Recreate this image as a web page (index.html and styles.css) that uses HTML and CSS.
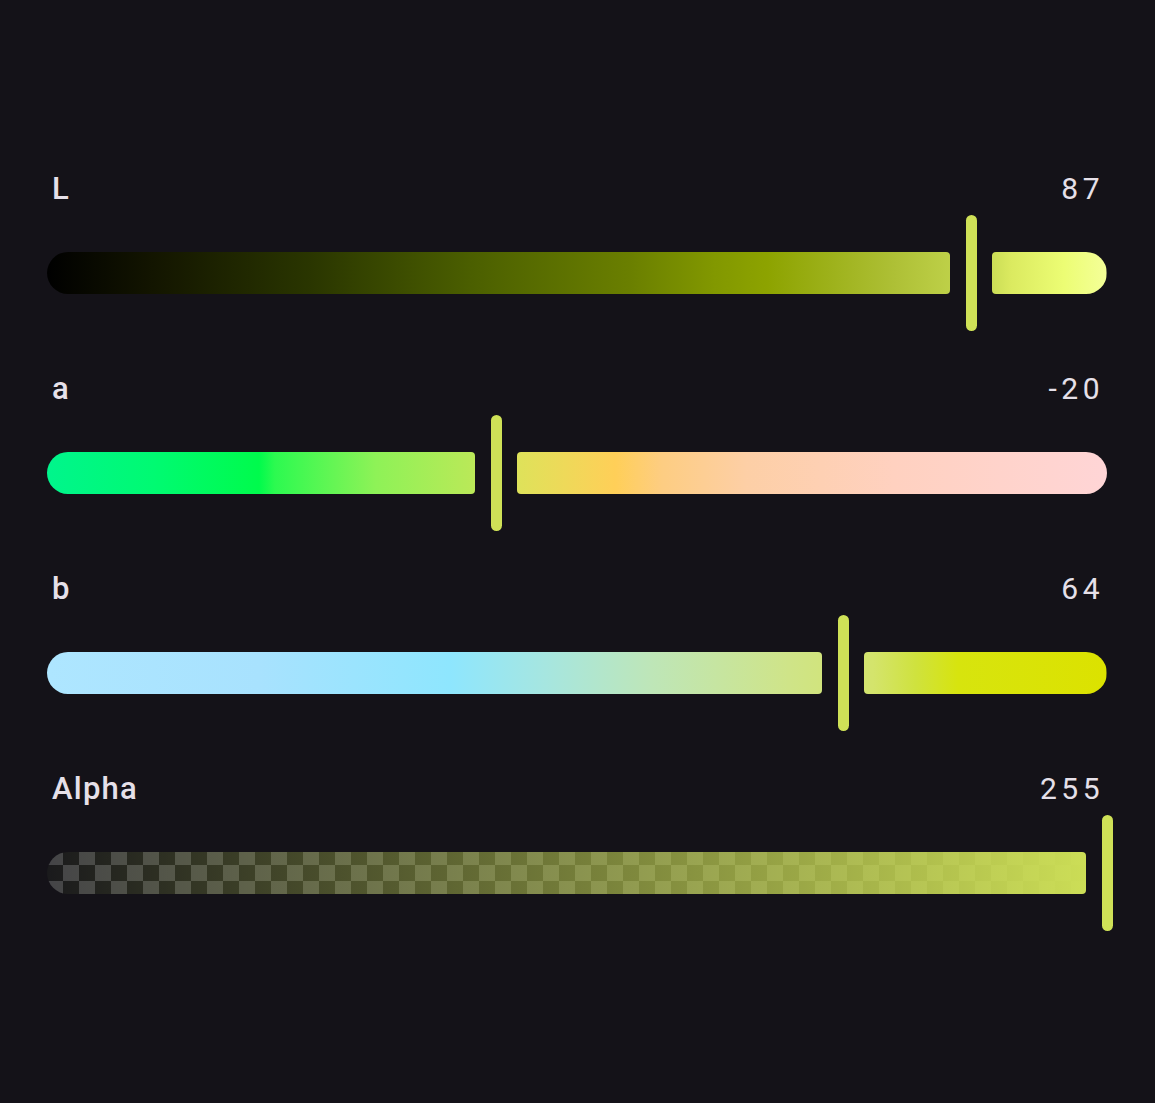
FILE: index.html
```html
<!doctype html>
<html lang="en">
<head>
    <meta charset="UTF-8">
    <meta name="viewport" content="width=device-width, initial-scale=1.0">
    <title>Lab color</title>
    <link rel="stylesheet" href="styles.css">
</head>
<body>
<main class="panel">
    <section class="slider" style="--v: 0.8721">
        <div class="head">
            <span class="name">L</span>
            <span class="value">87</span>
        </div>
        <div class="track track-l">
            <div class="seg lo"></div>
            <div class="seg hi"></div>
            <div class="thumb"></div>
        </div>
    </section>
    <section class="slider" style="--v: 0.4235">
        <div class="head">
            <span class="name">a</span>
            <span class="value">-20</span>
        </div>
        <div class="track track-a">
            <div class="seg lo"></div>
            <div class="seg hi"></div>
            <div class="thumb"></div>
        </div>
    </section>
    <section class="slider" style="--v: 0.7514">
        <div class="head">
            <span class="name">b</span>
            <span class="value">64</span>
        </div>
        <div class="track track-b">
            <div class="seg lo"></div>
            <div class="seg hi"></div>
            <div class="thumb"></div>
        </div>
    </section>
    <section class="slider" style="--v: 1">
        <div class="head">
            <span class="name">Alpha</span>
            <span class="value">255</span>
        </div>
        <div class="track track-alpha">
            <div class="seg lo"></div>
            <div class="seg hi"></div>
            <div class="thumb"></div>
        </div>
    </section>
</main>
</body>
</html>
```

FILE: styles.css
```css
*
{
    box-sizing: border-box;
}

body
{
    margin: 0;
    height: 1103px;
    background-color: #141218;
    font-family: Roboto, "Noto Sans", sans-serif;
    color: #e6e0e9;
}

.panel
{
    --track-w: 1060px;
    padding: 131px 48px 0 47px;
}

.slider
{
    padding-top: 40px;
}

.head
{
    display: flex;
    justify-content: space-between;
    align-items: baseline;
    height: 36px;
    line-height: 36px;
    margin-bottom: 8px;
    padding: 0 3px 0 5px;
}

.name
{
    font-size: 31px;
    font-weight: 500;
    letter-spacing: 0.04em;
}

.value
{
    font-size: 30px;
    font-weight: 400;
    letter-spacing: 0.15em;
}

/* track: two pieces split around the thumb */
.track
{
    position: relative;
    display: flex;
    align-items: center;
    height: 116px;
}

.seg
{
    height: 42px;
    background: var(--grad) 0 0 / var(--track-w) 100% no-repeat;
}

.lo
{
    width: calc(var(--v) * 100% - 21px);
    margin-right: auto;
    border-radius: 21px 4px 4px 21px;
}

.hi
{
    width: calc((1 - var(--v)) * 100% - 21px);
    border-radius: 4px 21px 21px 4px;
    background-position: right 0 top 0;
}

.thumb
{
    position: absolute;
    top: 0;
    bottom: 0;
    left: calc(var(--v) * 100%);
    width: 11px;
    margin-left: -5px;
    border-radius: 6px;
    background-color: #cfe157;
}

.track-l
{
    --grad: linear-gradient(to right,
        #000000 0%,
        #131500 10%,
        #2a3600 25%,
        #4b5f00 40%,
        #6a7f00 55%,
        #829800 63%,
        #8da300 68%,
        #aec036 80%,
        #c9dc55 89%,
        #dbea60 91%,
        #ecfd74 96%,
        #f4ff98 100%);
}

.track-a
{
    --grad: linear-gradient(to right,
        #00f58c 0%,
        #00fa72 10%,
        #00fb4c 20%,
        #2cfa50 21.5%,
        #8ef257 31%,
        #b9e958 40%,
        #dde35a 44%,
        #ffcf58 53.6%,
        #fdcd82 58%,
        #fdcfa6 66%,
        #ffd1c0 80%,
        #ffd5d6 100%);
}

.track-b
{
    --grad: linear-gradient(to right,
        #aee6ff 0%,
        #a8e2fe 20%,
        #8ee6fe 38%,
        #a6e6e0 47%,
        #bee6b8 57%,
        #cfe488 70%,
        #d4e46c 78%,
        #cfe23e 82%,
        #d7e40e 86%,
        #dce200 100%);
}

/* alpha: tint fading in over a checkerboard */
.track-alpha .seg
{
    background:
        linear-gradient(to right, rgba(207, 225, 87, 0), rgba(207, 225, 87, 1)) 0 0 / var(--track-w) 100% no-repeat,
        repeating-conic-gradient(#1a1a1c 0 25%, #444447 0 50%) 0 -3px / 32px 32px;
}
```
